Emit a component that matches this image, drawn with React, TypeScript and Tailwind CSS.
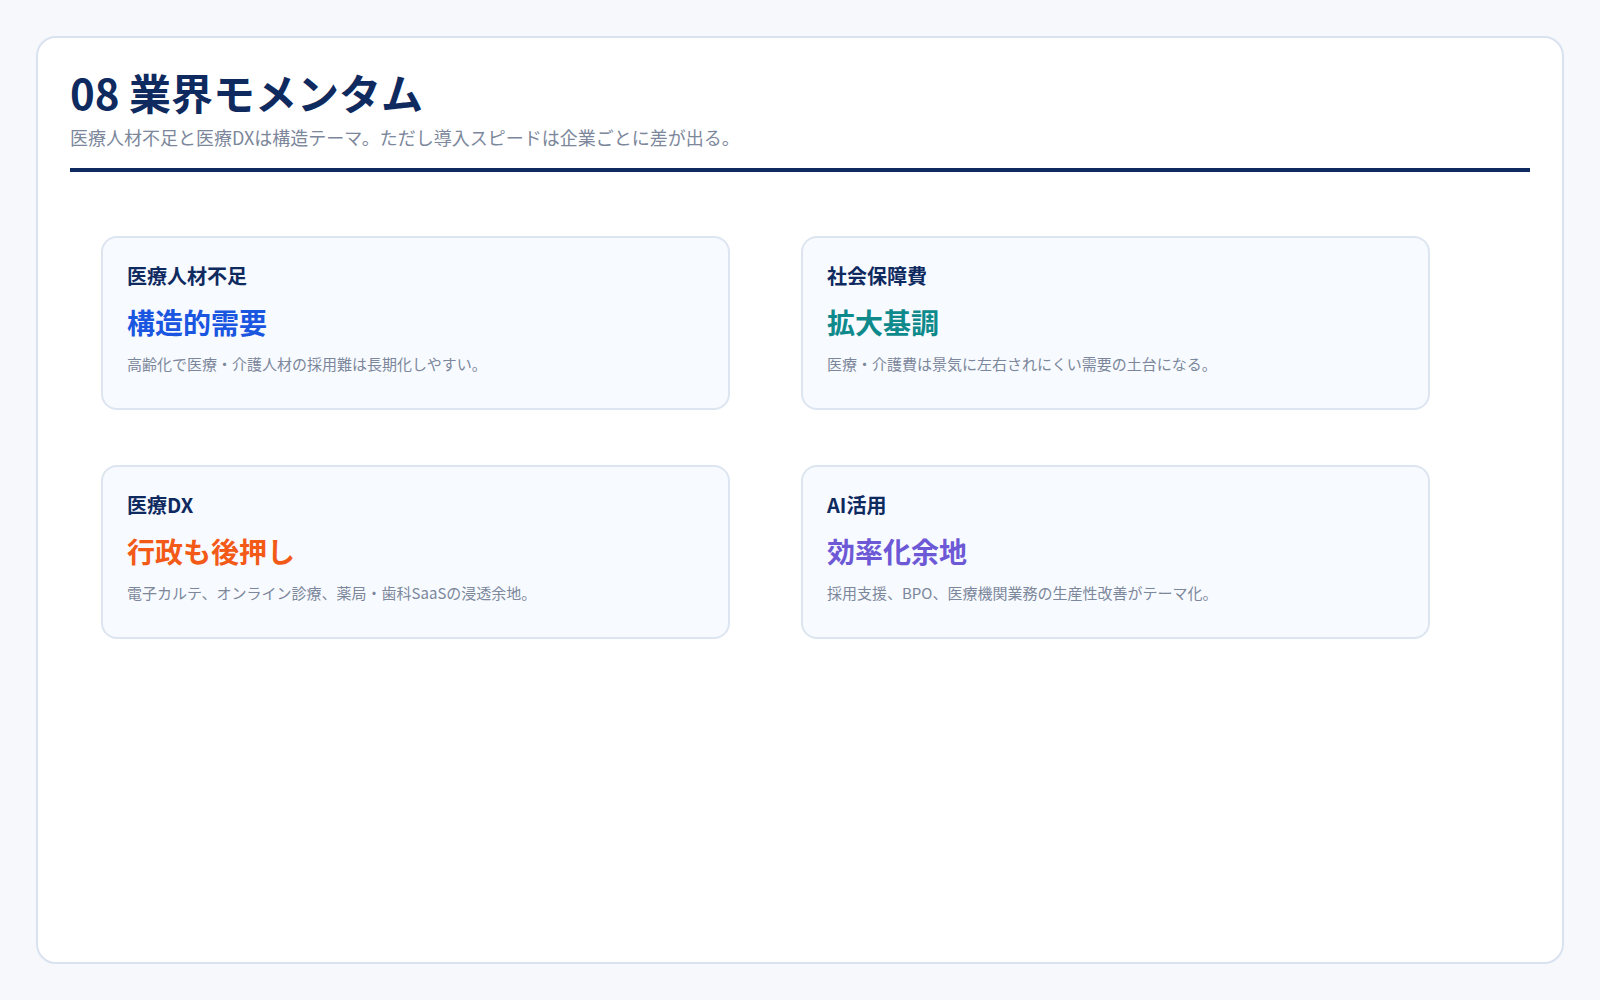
import React from "react";

type Momentum = {
  label: string;
  value: string;
  note: string;
  tone: string;
};

const items: Momentum[] = [
  {
    label: "医療人材不足",
    value: "構造的需要",
    note: "高齢化で医療・介護人材の採用難は長期化しやすい。",
    tone: "text-[#1a56e0]",
  },
  {
    label: "社会保障費",
    value: "拡大基調",
    note: "医療・介護費は景気に左右されにくい需要の土台になる。",
    tone: "text-[#0e8a8c]",
  },
  {
    label: "医療DX",
    value: "行政も後押し",
    note: "電子カルテ、オンライン診療、薬局・歯科SaaSの浸透余地。",
    tone: "text-[#f35a17]",
  },
  {
    label: "AI活用",
    value: "効率化余地",
    note: "採用支援、BPO、医療機関業務の生産性改善がテーマ化。",
    tone: "text-[#6d58d6]",
  },
];

function Card({ item }: { item: Momentum }) {
  return (
    <div className="h-[174px] rounded-2xl border-2 border-[#dde5f0] bg-[#f7faff] px-6 pt-6">
      <div className="text-[20px] font-bold leading-[28px] text-[#0f2a5f]">
        {item.label}
      </div>
      <div className={`mt-3.5 text-[28px] font-bold leading-[36px] ${item.tone}`}>
        {item.value}
      </div>
      <p className="mt-3 text-[15px] leading-[24px] text-[#7c879b]">
        {item.note}
      </p>
    </div>
  );
}

export default function App() {
  return (
    <div
      className="flex min-h-screen bg-[#f6f8fc] p-9"
      style={{ fontFamily: '"Noto Sans CJK JP", "Noto Sans", sans-serif' }}
    >
      <section className="flex h-[928px] flex-1 flex-col rounded-[20px] border-2 border-[#d9e2ee] bg-white px-8 pt-[26px]">
        <h1 className="text-[42px] font-bold leading-[56px] text-[#0f2a5f]">
          08 業界モメンタム
        </h1>
        <p className="mt-1 text-[18px] leading-[26px] text-[#7c879b]">
          医療人材不足と医療DXは構造テーマ。ただし導入スピードは企業ごとに差が出る。
        </p>
        <div className="mt-[18px] h-1 bg-[#0f2a5f]" />

        <div className="mt-16 grid grid-cols-[629px_629px] gap-x-[71px] gap-y-[55px] pl-[31px]">
          {items.map((item) => (
            <Card key={item.label} item={item} />
          ))}
        </div>
      </section>
    </div>
  );
}
